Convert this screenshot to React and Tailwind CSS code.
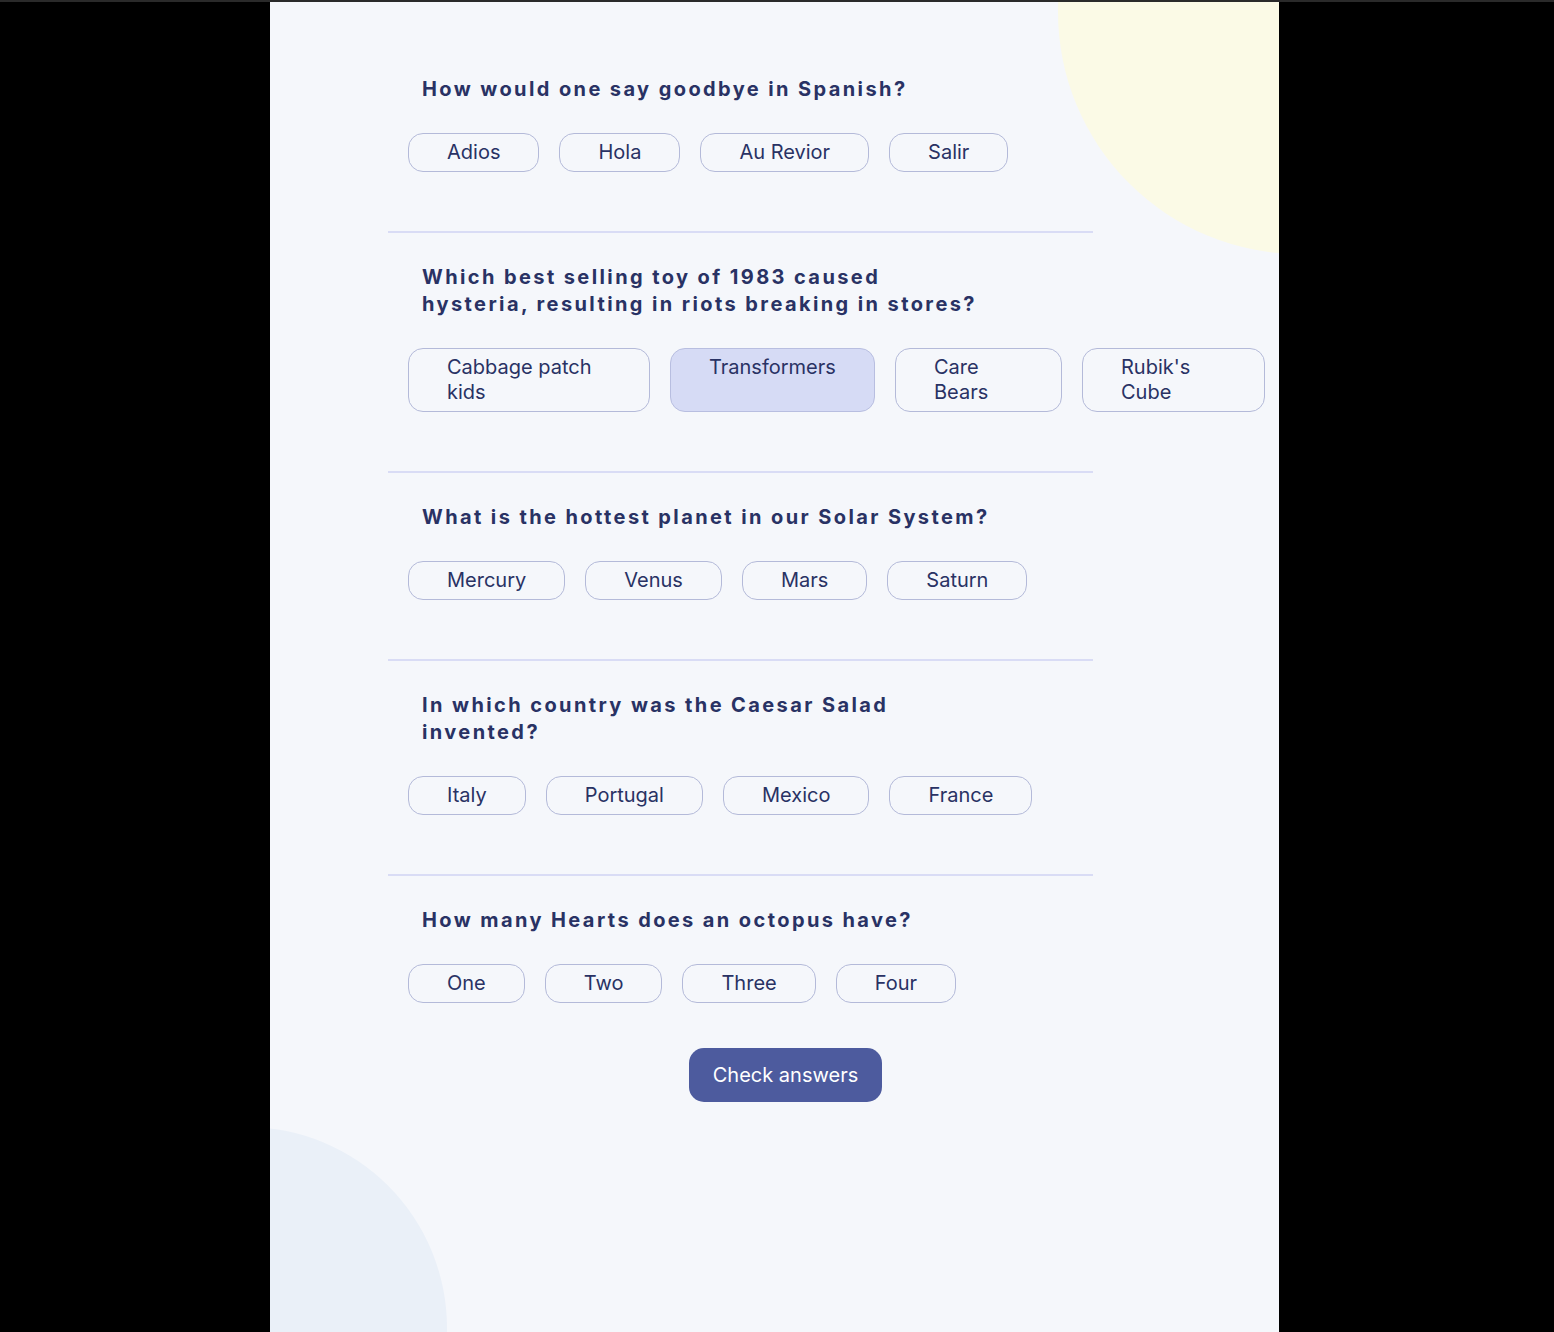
import React, { useState } from "react";

const questions = [
  {
    title: ["How would one say goodbye in Spanish?"],
    options: [{ label: "Adios" }, { label: "Hola" }, { label: "Au Revior" }, { label: "Salir" }],
  },
  {
    title: ["Which best selling toy of 1983 caused", "hysteria, resulting in riots breaking in stores?"],
    options: [
      { label: "Cabbage patch kids", w: "w-[242px]" },
      { label: "Transformers", w: "w-[205px]" },
      { label: "Care Bears", w: "w-[167px]" },
      { label: "Rubik's Cube", w: "w-[183px]" },
    ],
    selected: 1,
  },
  {
    title: ["What is the hottest planet in our Solar System?"],
    options: [{ label: "Mercury" }, { label: "Venus" }, { label: "Mars" }, { label: "Saturn" }],
  },
  {
    title: ["In which country was the Caesar Salad", "invented?"],
    options: [{ label: "Italy" }, { label: "Portugal" }, { label: "Mexico" }, { label: "France" }],
  },
  {
    title: ["How many Hearts does an octopus have?"],
    options: [{ label: "One" }, { label: "Two" }, { label: "Three" }, { label: "Four" }],
  },
];

const Question = ({ q, last, picked, onPick }) => {
  return (
    <div className={last ? "pt-[31px]" : "pt-[31px] pb-[59px] border-b-2 border-[#d9dcf5]"}>
      <h2 className="pl-[34px] text-[20px] leading-[27px] font-bold tracking-[2.4px] text-[#293264]">
        {q.title.map((line, i) => (
          <span key={i} className="block whitespace-nowrap">
            {line}
          </span>
        ))}
      </h2>
      <div className="mt-[30px] pl-[20px] flex gap-[20px]">
        {q.options.map((opt, i) => (
          <button
            key={opt.label}
            onClick={() => onPick(i)}
            className={`${opt.w || ""} shrink-0 flex items-start text-left px-[38px] py-[6px] rounded-[15px] border text-[20px] leading-[25px] text-[#293264] ${
              picked === i
                ? "bg-[#d6dbf5] border-[#b8bee0]"
                : "bg-transparent border-[#b4bad9]"
            }`}
          >
            {opt.label}
          </button>
        ))}
      </div>
    </div>
  );
};

const App = () => {
  const [answers, setAnswers] = useState(questions.map((q) => q.selected ?? null));

  return (
    <div className="min-h-screen bg-black border-t-2 border-[#2a2a2a] font-['Inter',sans-serif]">
      <div className="relative ml-[270px] w-[1009px] h-[1330px] overflow-hidden bg-[#f5f7fb]">
        {/* decorative blobs */}
        <div className="absolute left-[788px] top-[-232px] w-[484px] h-[484px] rounded-full bg-[#fbfae6]" />
        <div className="absolute left-[-225px] top-[1125px] w-[402px] h-[402px] rounded-full bg-[#eaf0f8]" />

        <div className="relative ml-[118px] w-[705px] pt-[43px]">
          {questions.map((q, i) => (
            <Question
              key={i}
              q={q}
              last={i === questions.length - 1}
              picked={answers[i]}
              onPick={(o) => setAnswers(answers.map((a, j) => (j === i ? o : a)))}
            />
          ))}

          <button className="mt-[45px] ml-[301px] w-[193px] h-[54px] rounded-[15px] bg-[#4d5b9e] text-white text-[20px]">
            Check answers
          </button>
        </div>
      </div>
    </div>
  );
};

export default App;
